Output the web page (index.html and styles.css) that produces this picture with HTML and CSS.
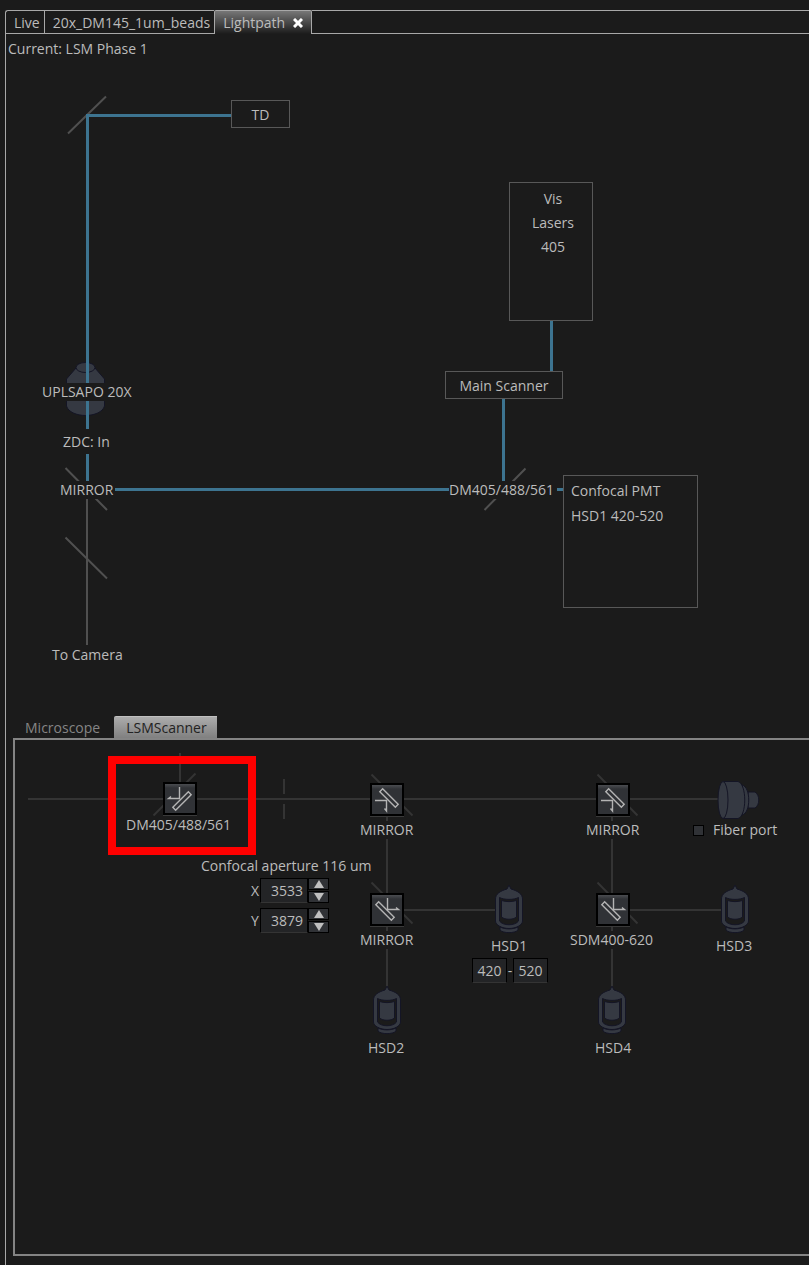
FILE: index.html
```html
<!DOCTYPE html>
<html lang="en">
<head>
<meta charset="utf-8">
<title>Lightpath</title>
<meta name="viewport" content="width=device-width, initial-scale=1">
<link rel="stylesheet" href="styles.css">
</head>
<body>
<svg class="defs" aria-hidden="true">
  <defs>
    <symbol id="detector" viewBox="0 0 30 50">
      <path class="body" d="M15 1L17 5C24 7 28.500 10 28.500 15V37C28.500 41 22 44.500 15 44.500S1.500 41 1.500 37V15C1.500 10 6 7 13 5Z"/>
      <path class="body" d="M6 43V46C9 49.500 21 49.500 24 46V43C19 45.500 11 45.500 6 43Z"/>
      <path class="window" d="M5.500 13.500C10 16 20 16 24.500 13.500V37C21 42 9 42 5.500 37Z"/>
      <path class="body" d="M7.500 16.500C12 18 18 18 22.500 16.500V33C19 36 11 36 7.500 33Z"/>
    </symbol>
    <symbol id="reflect-up-left" viewBox="0 0 30 29">
      <path d="M14.500 3V14.500H3.500L6 12.500"/>
      <rect x="6" y="15" width="22" height="4" transform="rotate(-45 17 17)"/>
    </symbol>
    <symbol id="reflect-left-down" viewBox="0 0 30 29">
      <path d="M3 15.500H14.500V26L12.500 23.500"/>
      <rect x="6" y="11" width="22" height="4" transform="rotate(45 17 13)"/>
    </symbol>
    <symbol id="reflect-up-right" viewBox="0 0 30 29">
      <path d="M15.500 3V14.500H26.500L24 12.500"/>
      <rect x="2" y="14" width="22" height="4" transform="rotate(45 13 16)"/>
    </symbol>
  </defs>
</svg>

<main class="frame">
  <nav class="tabs">
    <button class="tab" type="button">Live</button>
    <button class="tab" type="button">20x_DM145_1um_beads</button>
    <div class="tab active">
      <button class="tab-name" type="button">Lightpath</button>
      <button class="close" type="button" aria-label="Close Lightpath"><svg width="10" height="10" viewBox="0 0 10 10"><path d="M1 1L9 9M9 1L1 9"/></svg></button>
    </div>
    <span class="rest"></span>
  </nav>

  <section class="overview">
    <svg class="wires" width="803" height="682" viewBox="6 34 803 682" aria-hidden="true">
      <path class="glass" d="M76 368L66.500 379V406C68 412 77 415.500 85.500 415.500S103 412 104.500 406V379L95 368Z"/>
      <ellipse class="glass" cx="85.500" cy="367.500" rx="9.500" ry="5"/>
      <path class="plate" d="M68 133.500L106 96.500M65.500 468L107 510M65.500 537.500L107 578.500M484.500 510L525.500 468.500M87 498V645"/>
      <path class="beam" d="M231 115.500H87.500V481M115 489.500H563M551.500 321V371M503.500 399V481"/>
    </svg>
    <span class="label current">Current: LSM Phase 1</span>
    <div class="box td">TD</div>
    <div class="box lasers"><span>Vis</span><span>Lasers</span><span>405</span></div>
    <div class="box scanner">Main Scanner</div>
    <div class="box pmt"><span>Confocal PMT</span><span>HSD1 420-520</span></div>
    <span class="label objective">UPLSAPO 20X</span>
    <span class="label zdc">ZDC: In</span>
    <span class="label mirror">MIRROR</span>
    <span class="label dichroic">DM405/488/561</span>
    <span class="label camera">To Camera</span>
  </section>

  <section class="detail">
    <nav class="subtabs">
      <button class="subtab" type="button">Microscope</button>
      <button class="subtab active" type="button">LSMScanner</button>
    </nav>
    <div class="panel">
      <svg class="wires" width="794" height="514" viewBox="15 740 794 514" aria-hidden="true">
        <path class="dim" d="M28 799H719M180 753V782M284 779V794M284 804V819M387 815V987M612 815V987M404 910H496M630 910H722"/>
        <path class="dim" d="M153.500 815.500L195.500 773.500M371.500 774.500L412.500 815.500M597.500 774.500L637.500 815.500M371.500 882.500L412.500 923.500M597.500 882.500L637.500 923.500"/>
        <path class="glass" d="M748 792H755C760 795 760 805 755 808H748Z"/>
        <path class="glass" d="M742 785C751 787 751 813 742 815Z"/>
        <path class="glass" d="M723 781.500H738C747 784 747 816 738 818.500H723Z"/>
        <ellipse class="glass" cx="723" cy="800" rx="5" ry="18.500"/>
      </svg>

      <button class="optic o-dm" type="button" aria-label="DM405/488/561"><svg><use href="#reflect-up-left"/></svg></button>
      <button class="optic o-m1" type="button" aria-label="Mirror 1"><svg><use href="#reflect-left-down"/></svg></button>
      <button class="optic o-m2" type="button" aria-label="Mirror 2"><svg><use href="#reflect-left-down"/></svg></button>
      <button class="optic o-m3" type="button" aria-label="Mirror 3"><svg><use href="#reflect-up-right"/></svg></button>
      <button class="optic o-sdm" type="button" aria-label="SDM400-620"><svg><use href="#reflect-up-right"/></svg></button>

      <svg class="detector d1"><use href="#detector"/></svg>
      <svg class="detector d2"><use href="#detector"/></svg>
      <svg class="detector d3"><use href="#detector"/></svg>
      <svg class="detector d4"><use href="#detector"/></svg>

      <span class="label l-dm">DM405/488/561</span>
      <span class="label l-m1">MIRROR</span>
      <span class="label l-m2">MIRROR</span>
      <span class="label l-m3">MIRROR</span>
      <span class="label l-sdm">SDM400-620</span>
      <span class="label l-d1">HSD1</span>
      <span class="label l-d2">HSD2</span>
      <span class="label l-d3">HSD3</span>
      <span class="label l-d4">HSD4</span>

      <div class="fiber"><input id="fiber" type="checkbox"><label for="fiber">Fiber port</label></div>

      <div class="aperture">
        <span>Confocal aperture 116 um</span>
        <div class="spin">
          <label for="ax">X</label><input id="ax" type="text" value="3533">
          <div class="steps">
            <button type="button" aria-label="Increase X"><svg viewBox="0 0 12 8"><path d="M6 0L11 8H1Z"/></svg></button>
            <button type="button" aria-label="Decrease X"><svg viewBox="0 0 12 8"><path d="M1 0H11L6 8Z"/></svg></button>
          </div>
        </div>
        <div class="spin">
          <label for="ay">Y</label><input id="ay" type="text" value="3879">
          <div class="steps">
            <button type="button" aria-label="Increase Y"><svg viewBox="0 0 12 8"><path d="M6 0L11 8H1Z"/></svg></button>
            <button type="button" aria-label="Decrease Y"><svg viewBox="0 0 12 8"><path d="M1 0H11L6 8Z"/></svg></button>
          </div>
        </div>
      </div>

      <div class="band">
        <input type="text" value="420" aria-label="HSD1 from"><span>-</span><input type="text" value="520" aria-label="HSD1 to">
      </div>

      <div class="highlight"></div>
    </div>
  </section>
</main>
</body>
</html>
```
FILE: styles.css
```css
* { box-sizing: border-box; }

:root {
  --bg: #1b1b1b;
  --text: #bcbcbc;
  --edge: #a8a8a8;
  --wire: #505050;
}

body {
  margin: 0;
  background: var(--bg);
  color: var(--text);
  font: 14px/18px "Open Sans", "Noto Sans", sans-serif;
}

button, input {
  margin: 0;
  padding: 0;
  border: 0;
  border-radius: 0;
  background: none;
  color: inherit;
  font: inherit;
}

.defs { position: absolute; width: 0; height: 0; }

.frame {
  display: flex;
  flex-direction: column;
  min-height: 100vh;
  padding: 10px 0 0 5px;
}

.tabs { display: flex; height: 24px; }

.tab {
  padding: 1px 4px 0 8px;
  border: 1px solid var(--edge);
  border-right: 0;
  white-space: nowrap;
}

.tab:first-child { border-top-left-radius: 3px; }

.tab.active {
  display: flex;
  align-items: center;
  gap: 8px;
  padding-right: 8px;
  border-right: 1px solid var(--edge);
  border-bottom: 0;
  border-radius: 2px 2px 0 0;
  background: linear-gradient(#777, var(--bg));
}

.close { display: flex; }
.close path { stroke: #fff; stroke-width: 3; }

.rest {
  flex: 1;
  border: solid var(--edge);
  border-width: 1px 0;
}

.overview {
  position: relative;
  min-height: 682px;
  border-left: 1px solid var(--edge);
  overflow: hidden;
}

.wires { display: block; fill: none; }
.glass { fill: #353942; stroke: #141525; stroke-width: 1; }
.plate { stroke: var(--wire); stroke-width: 2; }
.beam { stroke: #3d7490; stroke-width: 3; }
.dim { stroke: #343434; stroke-width: 2; }

.label {
  position: absolute;
  background: var(--bg);
  white-space: nowrap;
}

.current { left: 2px; top: 6px; }
.objective { left: 36px; top: 349px; }
.zdc { left: 57px; top: 395px; padding: 4px 0 3px; }
.mirror { left: 54px; top: 447px; }
.dichroic { left: 443px; top: 447px; padding-right: 3px; }
.camera { left: 46px; top: 612px; }

.box {
  position: absolute;
  display: flex;
  flex-direction: column;
  align-items: center;
  border: 1px solid #585858;
  background: var(--bg);
  white-space: nowrap;
}

.td { left: 225px; top: 66px; width: 59px; height: 28px; padding-top: 5px; }
.lasers { left: 503px; top: 148px; width: 84px; height: 139px; padding: 7px 0 0 4px; gap: 6px; }
.scanner { left: 439px; top: 337px; width: 118px; height: 28px; padding-top: 5px; }
.pmt { left: 557px; top: 441px; width: 135px; height: 133px; padding: 6px 7px; gap: 7px; align-items: flex-start; }

.detail {
  flex: 1;
  display: flex;
  flex-direction: column;
  padding: 0 0 9px 7px;
  border-left: 1px solid var(--edge);
}

.subtabs { display: flex; gap: 2px; height: 22px; }
.subtab { padding: 2px 12px 0; color: #858585; }

.subtab.active {
  padding: 0 10px 0 12px;
  border-top: 1px solid #c0c0c0;
  border-radius: 2px 0 0 0;
  background: linear-gradient(#acacac, #808080);
  color: #222;
}

.panel {
  position: relative;
  flex: 1;
  border: 2px solid #848484;
  border-right: 0;
  overflow: hidden;
}

.optic {
  position: absolute;
  width: 34px;
  height: 33px;
  border: 2px solid #000;
  background: linear-gradient(#4a4c50, #303236 4px);
  box-shadow: 0 1px #3a3a3a;
}

.optic svg {
  display: block;
  width: 30px;
  height: 29px;
  fill: none;
  stroke: #b4b4b4;
  stroke-width: 1.4;
}

.o-dm { left: 148px; top: 42px; }
.o-m1 { left: 355px; top: 43px; }
.o-m2 { left: 581px; top: 43px; }
.o-m3 { left: 355px; top: 153px; }
.o-sdm { left: 581px; top: 153px; }

.detector { position: absolute; width: 30px; height: 50px; }
.body { fill: #353942; stroke: #141525; stroke-width: 1; }
.window { fill: var(--bg); stroke: #141525; stroke-width: 1; }

.d1 { left: 479px; top: 144px; }
.d2 { left: 357px; top: 245px; }
.d3 { left: 705px; top: 144px; }
.d4 { left: 582px; top: 245px; }

.l-dm { left: 111px; top: 76px; }
.l-m1 { left: 345px; top: 81px; }
.l-m2 { left: 571px; top: 81px; }
.l-m3 { left: 345px; top: 191px; }
.l-sdm { left: 555px; top: 191px; }
.l-d1 { left: 476px; top: 197px; }
.l-d2 { left: 353px; top: 299px; }
.l-d3 { left: 701px; top: 197px; }
.l-d4 { left: 580px; top: 299px; }

.fiber {
  position: absolute;
  left: 678px;
  top: 81px;
  display: flex;
  align-items: center;
  gap: 9px;
  white-space: nowrap;
}

.fiber input {
  appearance: none;
  width: 11px;
  height: 11px;
  border: 1px solid #000;
  background: #303236;
}

.aperture {
  position: absolute;
  left: 186px;
  top: 117px;
  display: flex;
  flex-direction: column;
  gap: 5px;
  white-space: nowrap;
}

.aperture > span { height: 16px; }

.spin { display: flex; align-items: center; padding-left: 50px; }
.spin label { width: 9px; }

.spin input, .band input {
  height: 25px;
  border: 1px solid #000;
  border-bottom-color: #343434;
  background: #232426;
}

.spin input { width: 48px; padding-left: 10px; }
.steps { display: flex; flex-direction: column; gap: 1px; }

.steps button {
  display: flex;
  align-items: center;
  justify-content: center;
  width: 21px;
  height: 12px;
  border: 1px solid #000;
  background: #303236;
}

.steps svg { width: 12px; height: 8px; fill: #c0c0c0; }

.band { position: absolute; left: 457px; top: 218px; display: flex; align-items: center; }
.band input { width: 35px; text-align: center; }
.band span { width: 6px; text-align: center; }

.highlight {
  position: absolute;
  left: 93px;
  top: 16px;
  width: 148px;
  height: 99px;
  border: 8px solid #f00;
  pointer-events: none;
}
```
